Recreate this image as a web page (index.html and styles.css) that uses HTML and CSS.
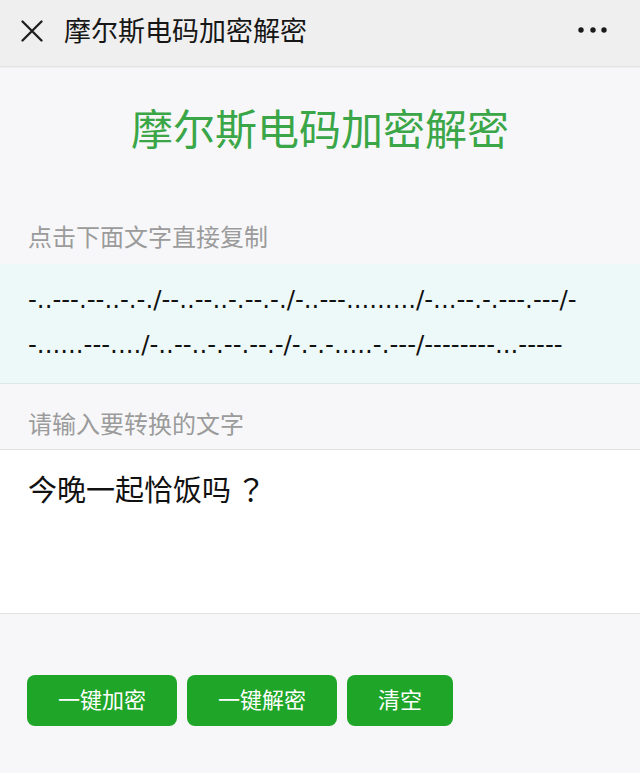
FILE: index.html
```html
<!DOCTYPE html>
<html lang="zh-CN">
<head>
<meta charset="utf-8">
<title>摩尔斯电码加密解密</title>
<link rel="stylesheet" href="styles.css">
</head>
<body>
<header class="topbar">
  <svg class="close-icon" width="22" height="22" viewBox="0 0 22 22" aria-hidden="true">
    <path d="M1.5 1.5 L20.5 20.5 M20.5 1.5 L1.5 20.5" stroke="#1e1e1e" stroke-width="2.3" stroke-linecap="round" fill="none"/>
  </svg>
  <span class="topbar-title">摩尔斯电码加密解密</span>
  <svg class="more-icon" width="30" height="8" viewBox="0 0 30 8" aria-hidden="true">
    <circle cx="3" cy="4" r="2.7" fill="#1a1a1a"/>
    <circle cx="15" cy="4" r="2.7" fill="#1a1a1a"/>
    <circle cx="26" cy="4" r="2.7" fill="#1a1a1a"/>
  </svg>
</header>

<main class="page">
  <h1 class="main-title">摩尔斯电码加密解密</h1>

  <div class="label label-copy">点击下面文字直接复制</div>
  <div class="morse-box">
    <p class="morse-text">-..---.--..-.-./--..--..-.--.-./-..---........./-...--.-.---.---/-<br>-......---..../-..--..-.--.--.-/-.-.-.....-.---/--------...-----</p>
  </div>

  <div class="label label-input">请输入要转换的文字</div>
  <div class="input-box">
    <p class="input-text">今晚一起恰饭吗<span class="punct">？</span></p>
  </div>

  <div class="actions">
    <button class="btn">一键加密</button>
    <button class="btn">一键解密</button>
    <button class="btn">清空</button>
  </div>
</main>
</body>
</html>
```

FILE: styles.css
```css
* {
  box-sizing: border-box;
}

html, body {
  margin: 0;
  padding: 0;
}

body {
  background: #f7f7f9;
  font-family: "Noto Sans CJK SC", "Noto Sans", sans-serif;
  color: #111;
  width: 640px;
  height: 773px;
  overflow: hidden;
}

.topbar {
  height: 67px;
  background: #efefef;
  border-bottom: 1px solid #e2e2e2;
  box-shadow: 0 1px 1px rgba(0, 0, 0, 0.03);
  display: flex;
  align-items: center;
  padding: 0 32px 0 21px;
}

.close-icon {
  flex: none;
  margin-top: -4px;
}

.topbar-title {
  margin-left: 21px;
  font-size: 27px;
  line-height: 1;
  color: #161616;
  margin-top: -7px;
}

.more-icon {
  margin-left: auto;
  margin-top: -6px;
}

.page {
  display: flex;
  flex-direction: column;
}

.main-title {
  margin: 35px 0 0;
  text-align: center;
  font-size: 42px;
  line-height: 50px;
  font-weight: normal;
  color: #3aa647;
}

.label {
  font-size: 24px;
  line-height: 30px;
  color: #9b9b9b;
  padding: 0 28px;
}

.label-copy {
  padding-top: 69px;
  padding-bottom: 13px;
}

.label-input {
  padding-top: 24px;
  padding-bottom: 11px;
}

.morse-box {
  background: #edf9f8;
  border-bottom: 1px solid #dce8e7;
  padding: 13px 28px 15px;
  height: 120px;
}

.morse-text {
  margin: 0;
  font-family: "DejaVu Sans", sans-serif;
  font-size: 24.5px;
  line-height: 45px;
  color: #111;
  white-space: nowrap;
}

.input-box {
  background: #ffffff;
  border-top: 1px solid #e0e0e0;
  border-bottom: 1px solid #e0e0e0;
  height: 165px;
  padding: 20px 28px 0;
}

.input-text {
  margin: 0;
  font-size: 29px;
  line-height: 36px;
  color: #111;
  text-spacing-trim: space-all;
}

.punct {
  display: inline-block;
  width: 1em;
  padding-left: 0.17em;
  font-size: 30px;
  font-family: "Noto Sans CJK TC", "Noto Sans CJK SC", sans-serif;
  font-variant-east-asian: full-width;
}

.actions {
  display: flex;
  gap: 10px;
  padding: 61px 27px 0;
}

.btn {
  height: 51px;
  padding: 0 31px 4px;
  border: none;
  border-radius: 8px;
  background: #1fa628;
  color: #ffffff;
  font-family: "Noto Sans CJK SC", "Noto Sans", sans-serif;
  font-size: 22px;
  line-height: 47px;
}
```
